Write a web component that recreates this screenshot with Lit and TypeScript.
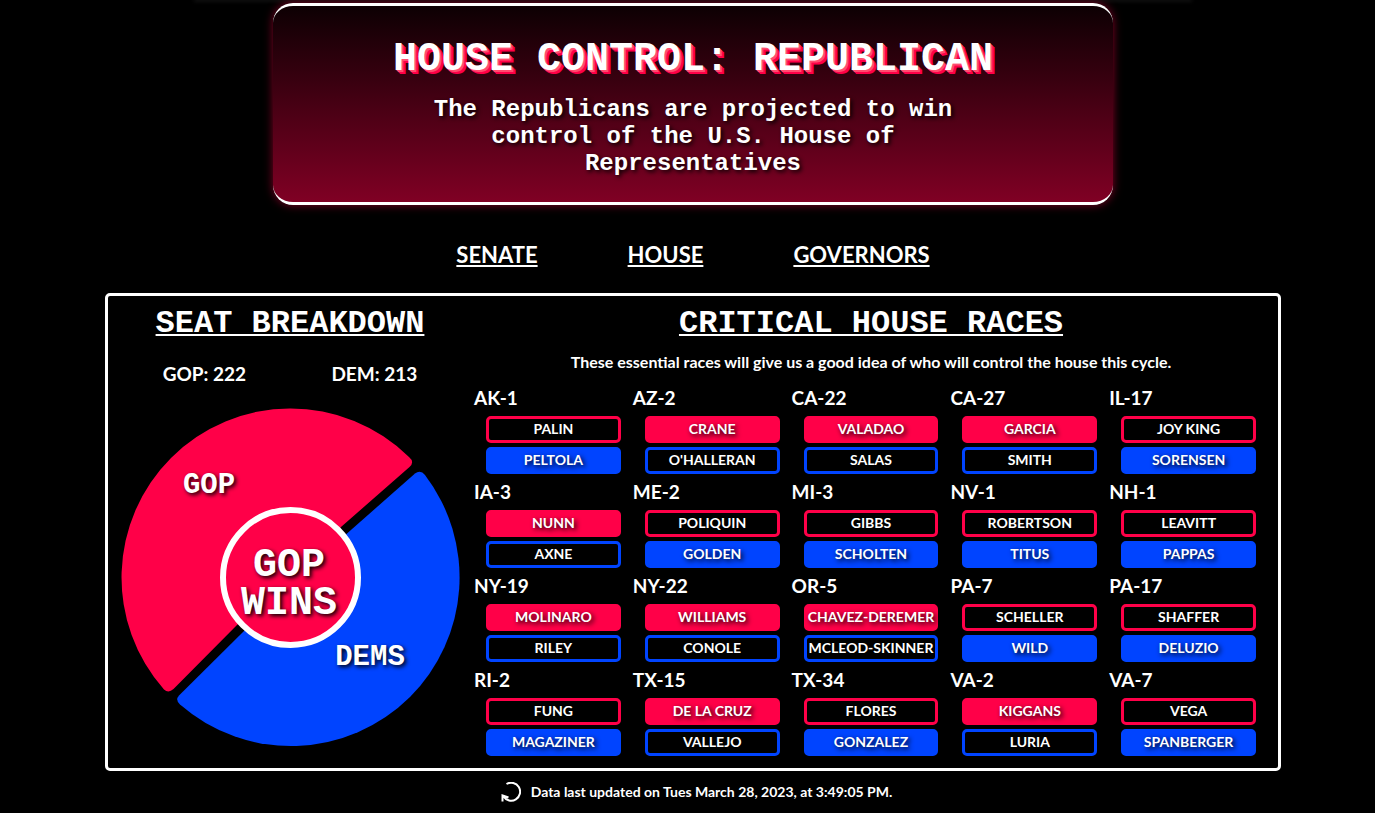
import { LitElement, html, css } from "lit";
import { customElement, property } from "lit/decorators.js";
import { classMap } from "lit/directives/class-map.js";

interface Race {
  district: string;
  gop: string;
  dem: string;
  winner: "gop" | "dem";
}

const race = (district: string, gop: string, dem: string, winner: "gop" | "dem"): Race => ({ district, gop, dem, winner });

const RACES: Race[] = [
  race("AK-1", "Palin", "Peltola", "dem"),
  race("AZ-2", "Crane", "O'Halleran", "gop"),
  race("CA-22", "Valadao", "Salas", "gop"),
  race("CA-27", "Garcia", "Smith", "gop"),
  race("IL-17", "Joy King", "Sorensen", "dem"),
  race("IA-3", "Nunn", "Axne", "gop"),
  race("ME-2", "Poliquin", "Golden", "dem"),
  race("MI-3", "Gibbs", "Scholten", "dem"),
  race("NV-1", "Robertson", "Titus", "dem"),
  race("NH-1", "Leavitt", "Pappas", "dem"),
  race("NY-19", "Molinaro", "Riley", "gop"),
  race("NY-22", "Williams", "Conole", "gop"),
  race("OR-5", "Chavez-DeRemer", "McLeod-Skinner", "gop"),
  race("PA-7", "Scheller", "Wild", "dem"),
  race("PA-17", "Shaffer", "Deluzio", "dem"),
  race("RI-2", "Fung", "Magaziner", "dem"),
  race("TX-15", "De La Cruz", "Vallejo", "gop"),
  race("TX-34", "Flores", "Gonzalez", "dem"),
  race("VA-2", "Kiggans", "Luria", "gop"),
  race("VA-7", "Vega", "Spanberger", "dem"),
];

@customElement("race-card")
export class RaceCard extends LitElement {
  @property({ attribute: false }) race!: Race;

  static styles = css`
    :host { display: block; }
    .district { margin: 0; font-size: 19px; line-height: 30px; font-weight: 700; }
    .list {
      list-style: none;
      margin: 0;
      padding: 3px 12px 0;
      display: grid;
      grid-template-columns: minmax(0, 1fr);
      gap: 4px;
    }
    .name {
      box-sizing: border-box;
      height: 27px;
      border: 3px solid var(--party);
      border-radius: 5px;
      font-size: 14px;
      line-height: 20px;
      font-weight: 700;
      text-align: center;
      text-transform: uppercase;
      white-space: nowrap;
    }
    .gop { --party: var(--red); }
    .dem { --party: var(--blue); }
    .won { background: var(--party); text-shadow: 2px 2px 5px #000; }
  `;

  private candidate(party: "gop" | "dem") {
    const classes = { name: true, [party]: true, won: this.race.winner === party };
    return html`<li class=${classMap(classes)}>${this.race[party]}</li>`;
  }

  render() {
    return html`
      <h3 class="district">${this.race.district}</h3>
      <ul class="list">${this.candidate("gop")}${this.candidate("dem")}</ul>
    `;
  }
}

@customElement("seat-chart")
export class SeatChart extends LitElement {
  static styles = css`
    :host { display: block; }
    .chart { display: block; width: 100%; }
    .red { fill: var(--red); }
    .blue { fill: var(--blue); }
    .hub { fill: var(--red); stroke: #fff; stroke-width: 6; }
    .label, .result {
      fill: #fff;
      font-family: "Liberation Mono", monospace;
      font-weight: 700;
      text-anchor: middle;
      text-shadow: 2px 2px 4px #000;
    }
    .label { font-size: 29px; }
    .result { font-size: 40px; }
  `;

  render() {
    return html`
      <svg class="chart" viewBox="-1 0 340 340" role="img" aria-label="GOP 222 seats, Democrats 213 seats">
        <path class="red" d="M220 119 L288.500 59 Q294 54 288 49 A169 169 0 0 0 50 50 A169 169 0 0 0 43 281.500 Q47.500 285.500 52.500 281 L116 217 Z" />
        <path class="blue" d="M226 125.500 L294 65.500 Q299.500 61.500 304 67 A169 169 0 0 1 289 289 A169 169 0 0 1 59 296.500 Q54 292 58 287.500 L123 223 Z" />
        <circle class="hub" cx="169.500" cy="169.500" r="67.500" />
        <text class="label" x="88" y="85">GOP</text>
        <text class="label" x="249" y="257">DEMS</text>
        <text class="result"><tspan x="168" y="168">GOP</tspan><tspan x="168" y="206">WINS</tspan></text>
      </svg>
    `;
  }
}

@customElement("app-root")
export class AppRoot extends LitElement {
  static styles = css`
    :host {
      --red: #ff0048;
      --blue: #0044ff;
      display: flex;
      flex-direction: column;
      align-items: center;
      box-sizing: border-box;
      min-height: 100vh;
      padding-left: 11px;
      overflow: hidden;
      background: #000;
      color: #fff;
      font-family: Lato, sans-serif;
    }
    .topline { width: 73%; height: 0; box-shadow: 0 0 4px 1px #222; }
    .banner {
      box-sizing: border-box;
      width: 840px;
      max-width: 100%;
      margin-top: 3px;
      padding: 31px 20px 25px;
      border: solid #fff;
      border-width: 3px 0;
      border-radius: 20px;
      background: linear-gradient(#0d0003, #800024);
      box-shadow: 0 0 10px #800024;
      text-align: center;
      font-family: "Liberation Mono", monospace;
      font-weight: 700;
    }
    .title {
      margin: 0;
      font-size: 40px;
      line-height: 46px;
      text-transform: uppercase;
      text-shadow: 1px 1px #ff4d6f, 2px 2px #ff4d6f, 3px 3px #ff0048, 4px 4px #ff0048;
    }
    .summary {
      max-width: 600px;
      margin: 13px auto 0;
      font-size: 24px;
      line-height: 27px;
      text-shadow: 2px 2px 4px #000;
    }
    .nav { display: flex; gap: 90px; margin: 34px 0 23px; }
    .link {
      color: inherit;
      font-size: 22px;
      line-height: 31px;
      font-weight: 700;
      text-transform: uppercase;
      text-decoration: underline 2px;
      text-underline-offset: 2px;
      text-decoration-skip-ink: none;
    }
    .panel {
      box-sizing: border-box;
      width: min(1176px, 100%);
      display: grid;
      grid-template-columns: 340fr 794fr;
      column-gap: 14px;
      padding: 10px 10px 12px 12px;
      border: 3px solid #fff;
      border-radius: 5px;
    }
    .heading {
      margin: 0;
      font-family: "Liberation Mono", monospace;
      font-size: 32px;
      line-height: 36px;
      font-weight: 700;
      text-align: center;
      text-transform: uppercase;
      text-decoration: underline 2px;
      text-underline-offset: 2px;
      text-decoration-skip-ink: none;
      text-shadow: 2px 2px 4px #000;
    }
    .totals {
      display: flex;
      justify-content: space-around;
      margin: 19px 0 21px;
      font-size: 19px;
      line-height: 26px;
      font-weight: 700;
    }
    .intro { margin: 9px 0 10px; font-size: 16px; line-height: 22px; font-weight: 700; text-align: center; }
    .races { display: grid; grid-template-columns: repeat(5, minmax(0, 1fr)); row-gap: 3px; }
    .footer {
      display: flex;
      align-items: center;
      gap: 10px;
      margin-top: 9px;
      padding-left: 7px;
      font-size: 14px;
      line-height: 24px;
      font-weight: 700;
    }
    .refresh { display: flex; padding: 0; border: 0; background: none; color: inherit; }
    .icon { width: 20px; height: 20px; fill: none; stroke: currentColor; stroke-width: 2; }
  `;

  render() {
    return html`
      <div class="topline"></div>
      <header class="banner">
        <h1 class="title">House Control: Republican</h1>
        <p class="summary">The Republicans are projected to win control of the U.S. House of Representatives</p>
      </header>
      <nav class="nav">
        ${["Senate", "House", "Governors"].map((name) => html`<a class="link" href="#${name.toLowerCase()}">${name}</a>`)}
      </nav>
      <main class="panel">
        <section>
          <h2 class="heading">Seat Breakdown</h2>
          <div class="totals"><span>GOP: 222</span><span>DEM: 213</span></div>
          <seat-chart></seat-chart>
        </section>
        <section>
          <h2 class="heading">Critical House Races</h2>
          <p class="intro">These essential races will give us a good idea of who will control the house this cycle.</p>
          <div class="races">${RACES.map((r) => html`<race-card .race=${r}></race-card>`)}</div>
        </section>
      </main>
      <footer class="footer">
        <button class="refresh" type="button" aria-label="Refresh data">
          <svg class="icon" viewBox="0 0 20 20" aria-hidden="true">
            <path d="M5.500 2 A9 9 0 1 1 2.500 14.500 M1.500 19.500 V13.500 L7.500 15.500" />
          </svg>
        </button>
        <span>Data last updated on Tues March 28, 2023, at 3:49:05 PM.</span>
      </footer>
    `;
  }
}
